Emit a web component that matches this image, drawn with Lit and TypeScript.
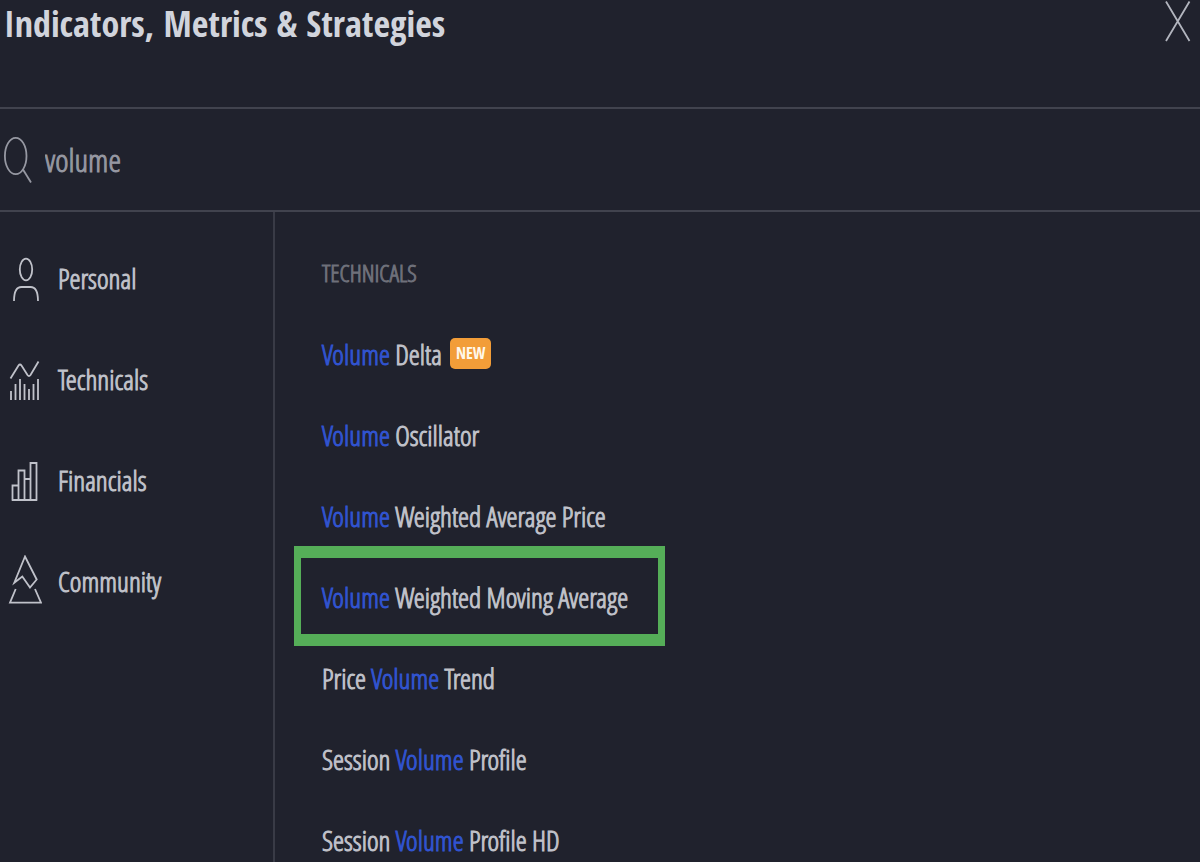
import { LitElement, html, css, svg } from "lit";
import { customElement, state } from "lit/decorators.js";

interface Indicator {
  name: string;
  isNew?: boolean;
  marked?: boolean;
}

const INDICATORS: Indicator[] = [
  { name: "Volume Delta", isNew: true },
  { name: "Volume Oscillator" },
  { name: "Volume Weighted Average Price" },
  { name: "Volume Weighted Moving Average", marked: true },
  { name: "Price Volume Trend" },
  { name: "Session Volume Profile" },
  { name: "Session Volume Profile HD" },
];

const CATEGORIES = [
  {
    label: "Personal",
    icon: svg`<ellipse cx="18" cy="17.5" rx="6.2" ry="10.8"/>
      <path d="M6 49C6 40 9 35 13.500 35H22.500C27 35 30 40 30 49"/>`,
  },
  {
    label: "Technicals",
    icon: svg`<path d="M2.500 25.500L10.500 12.500Q12 10.500 13.500 12.500L19.500 22Q21 24 22.500 22L30.500 8.500"/>
      <path d="M3 38V47M7.500 31V47M12 26V47M16.500 31V47M21 36V47M25.500 31V47M30 26V47"/>`,
  },
  {
    label: "Financials",
    icon: svg`<path d="M4.500 46V31.500H10.500M10.500 46V16.500H16.500V46M16.500 25H22.500M22.500 46V9H28.500V46M3.700 46H29.300"/>`,
  },
  {
    label: "Community",
    icon: svg`<path d="M17 1.500L6.300 27.700L14.300 21.500L22 32.500L28.700 24.500Z"/>
      <path d="M7.700 34L2 47.700H33L27 34"/>`,
  },
];

@customElement("app-root")
export class AppRoot extends LitElement {
  @state() private query = "volume";

  static styles = css`
    :host {
      display: flex;
      flex-direction: column;
      height: 100vh;
      overflow: hidden;
      background: #20222d;
      color: #c0c2ca;
      font-family: "Open Sans Condensed Light", "Open Sans Condensed", "Open Sans", sans-serif;
      font-size: 28px;
      font-weight: 400;
    }
    * {
      box-sizing: border-box;
    }
    button,
    input {
      border: 0;
      padding: 0;
      margin: 0;
      background: none;
      color: inherit;
      font: inherit;
      text-align: left;
      outline: none;
    }
    button {
      cursor: pointer;
    }
    svg {
      display: block;
      flex: none;
      fill: none;
      stroke: currentColor;
      stroke-width: 1.8;
    }
    .header {
      display: flex;
      justify-content: space-between;
      align-items: flex-start;
      flex: none;
      padding: 0 8px 59px 4px;
      border-bottom: 2px solid #41434e;
    }
    .title {
      margin: 0;
      font-family: "Open Sans Condensed", "Open Sans", sans-serif;
      font-size: 36px;
      line-height: 48px;
      font-weight: 700;
      color: #d1d4dc;
    }
    .close {
      color: #b2b5be;
    }
    .search {
      display: flex;
      align-items: center;
      flex: none;
      gap: 12px;
      height: 103px;
      padding-left: 3px;
      border-bottom: 2px solid #41434e;
      color: #9698a2;
    }
    .search-input {
      flex: 1;
      min-width: 0;
      font-size: 32px;
      line-height: 44px;
      -webkit-text-stroke: 1px currentColor;
    }
    .body {
      display: flex;
      flex: 1;
      min-height: 0;
    }
    .sidebar {
      flex: none;
      width: 275px;
      padding-top: 17px;
      border-right: 2px solid #393b46;
    }
    .category {
      display: flex;
      align-items: center;
      gap: 16px;
      width: 100%;
      height: 101px;
      padding-left: 8px;
    }
    .category span {
      padding-bottom: 4px;
      -webkit-text-stroke: 1px currentColor;
    }
    .content {
      flex: 1;
      min-width: 0;
      padding: 41px 0 0 47px;
      overflow: hidden;
    }
    .heading {
      margin: 0 0 20px;
      font-size: 24px;
      line-height: 40px;
      font-weight: 400;
      color: #6e707a;
      -webkit-text-stroke: 1px currentColor;
    }
    .list {
      list-style: none;
      margin: 0;
      padding: 0;
    }
    .item {
      position: relative;
      display: flex;
      align-items: center;
      width: fit-content;
      height: 81px;
      white-space: pre;
    }
    .name {
      -webkit-text-stroke: 1px currentColor;
    }
    .marked::after {
      content: "";
      position: absolute;
      inset: -10px -37px -9px -28px;
      border: solid #55ae58;
      border-width: 12px 7px;
      pointer-events: none;
    }
    .match {
      color: #3154d0;
      -webkit-text-stroke-color: #3154d0;
    }
    .badge {
      margin-left: 8px;
      padding: 0 6px;
      border-radius: 5px;
      background: #f29d38;
      color: #fff8ea;
      font-family: "Open Sans Condensed", "Open Sans", sans-serif;
      font-size: 16px;
      line-height: 31px;
      font-weight: 700;
    }
  `;

  private renderName(name: string) {
    const start = this.query ? name.toLowerCase().indexOf(this.query.toLowerCase()) : -1;
    if (start < 0) return html`<span class="name">${name}</span>`;
    const end = start + this.query.length;
    return html`<span class="name">${name.slice(0, start)}<span class="match">${name.slice(start, end)}</span>${name.slice(end)}</span>`;
  }

  render() {
    return html`
      <header class="header">
        <h1 class="title">Indicators, Metrics &amp; Strategies</h1>
        <button class="close" type="button" aria-label="Close">
          <svg width="28" height="44" viewBox="0 0 28 44"><path d="M2 1.500L25.500 41M25.500 1.500L2 41" /></svg>
        </button>
      </header>
      <label class="search">
        <svg width="30" height="50" viewBox="0 0 30 50">
          <ellipse cx="12.700" cy="21" rx="10.800" ry="18.200" />
          <path d="M20 34.500L28 47.500" />
        </svg>
        <input
          class="search-input"
          type="text"
          aria-label="Search"
          .value=${this.query}
          @input=${(e: Event) => (this.query = (e.target as HTMLInputElement).value)}
        />
      </label>
      <div class="body">
        <nav class="sidebar">
          ${CATEGORIES.map(
            (c) => html`<button class="category" type="button">
              <svg width="34" height="55" viewBox="0 0 34 55">${c.icon}</svg>
              <span>${c.label}</span>
            </button>`
          )}
        </nav>
        <main class="content">
          <h2 class="heading">TECHNICALS</h2>
          <ul class="list">
            ${INDICATORS.map(
              (i) => html`<li>
                <button class="item ${i.marked ? "marked" : ""}" type="button">${this.renderName(i.name)}${i.isNew ? html`<span class="badge">NEW</span>` : ""}</button>
              </li>`
            )}
          </ul>
        </main>
      </div>
    `;
  }
}
